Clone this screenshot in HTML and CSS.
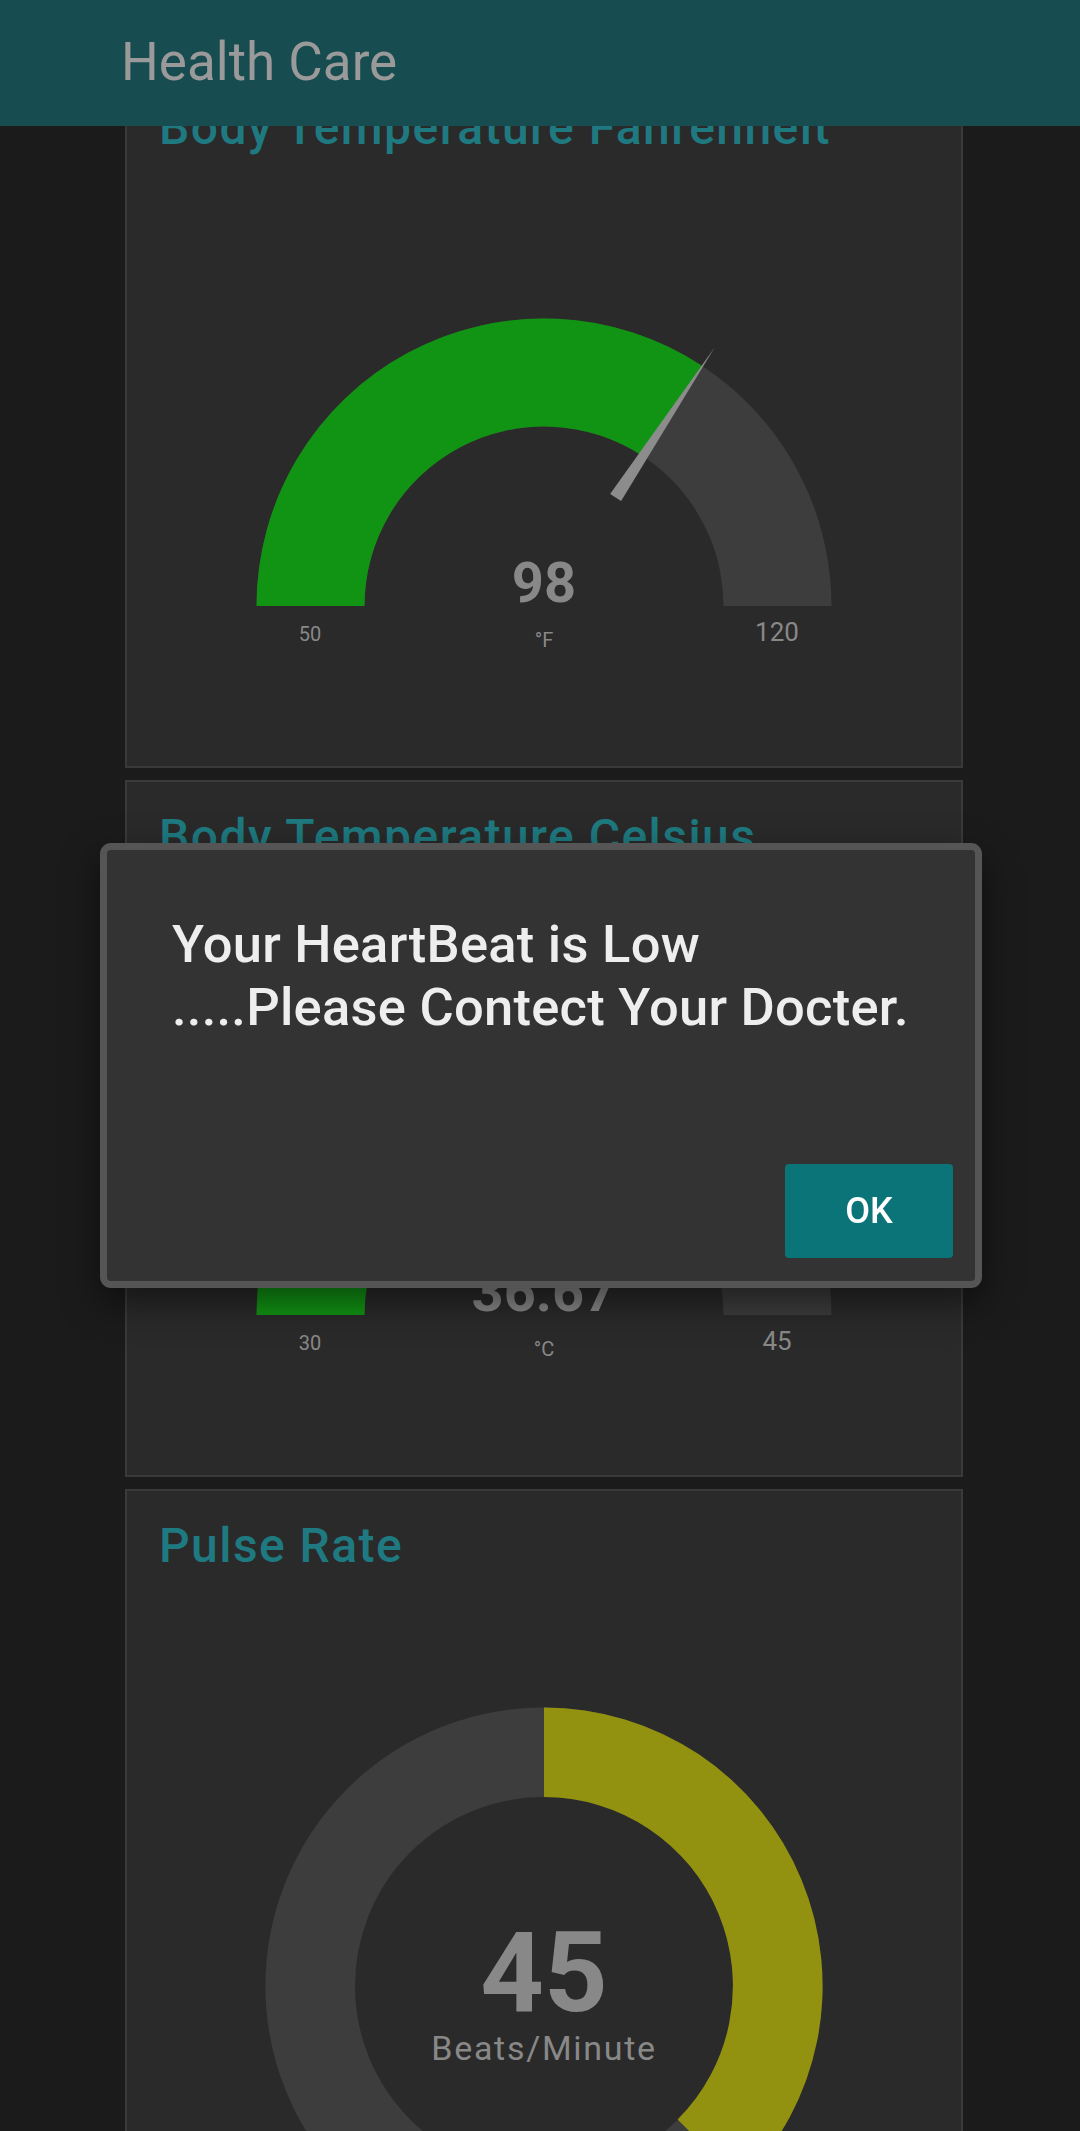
FILE: index.html
```html
<!DOCTYPE html>
<html lang="en">
<head>
<meta charset="utf-8">
<title>Health Care</title>
<link rel="stylesheet" href="styles.css">
</head>
<body>
<header class="appbar">
  <h1 class="appbar-title">Health Care</h1>
</header>

<main class="cards">
  <section class="card">
    <h2 class="card-title">Body Temperature Fahrenheit</h2>
    <svg class="gauge" viewBox="0 0 834 609" width="834" height="609">
      <path class="track" d="M129.5 450 A287.5 287.5 0 0 1 704.5 450 L596.5 450 A179.5 179.5 0 0 0 237.5 450 Z"/>
      <path class="fill-green" d="M129.5 450 A287.5 287.5 0 0 1 575.4 210.1 L515.9 300.2 A179.5 179.5 0 0 0 237.5 450 Z"/>
      <polygon class="needle" points="494.1,345.1 483.1,337.9 587.8,191.3"/>
      <text class="g-value" x="417" y="446">98</text>
      <text class="g-unit" x="417" y="491">°F</text>
      <text class="g-min" x="183" y="485">50</text>
      <text class="g-max" x="650" y="485">120</text>
    </svg>
  </section>

  <section class="card">
    <h2 class="card-title">Body Temperature Celsius</h2>
    <svg class="gauge" viewBox="0 0 834 609" width="834" height="609">
      <path class="track" d="M129.5 450 A287.5 287.5 0 0 1 704.5 450 L596.5 450 A179.5 179.5 0 0 0 237.5 450 Z"/>
      <path class="fill-green" d="M129.5 450 A287.5 287.5 0 0 1 367.3 166.8 L385.9 273.2 A179.5 179.5 0 0 0 237.5 450 Z"/>
      <polygon class="needle" points="401,320.9 388,323.1 363.4,144.7"/>
      <text class="g-value" x="417" y="446">36.67</text>
      <text class="g-unit" x="417" y="491">°C</text>
      <text class="g-min" x="183" y="485">30</text>
      <text class="g-max" x="650" y="485">45</text>
    </svg>
  </section>

  <section class="card">
    <h2 class="card-title">Pulse Rate</h2>
    <svg class="donut" viewBox="0 0 834 609" width="834" height="609">
      <circle class="ring" cx="417" cy="412" r="233.8"/>
      <path class="fill-olive" d="M417 133.4 A278.6 278.6 0 0 1 614 609 L550.6 545.6 A189 189 0 0 0 417 223 Z"/>
      <text class="d-value" x="417" y="437">45</text>
      <text class="d-unit" x="417" y="486">Beats/Minute</text>
    </svg>
  </section>
</main>

<div class="dialog" role="alertdialog">
  <p class="dialog-msg">Your HeartBeat is Low<br>.....Please Contect Your Docter.</p>
  <div class="dialog-actions">
    <button class="btn-ok" type="button">OK</button>
  </div>
</div>
</body>
</html>
```

FILE: styles.css
```css
* { box-sizing: border-box; }

html, body {
  margin: 0;
  padding: 0;
}

body {
  background: #1b1b1b;
  font-family: Roboto, "Noto Sans", "Liberation Sans", sans-serif;
  color: #eeeeee;
}

.appbar {
  position: fixed;
  top: 0;
  left: 0;
  right: 0;
  height: 126px;
  background: #174c50;
  z-index: 10;
  display: flex;
  align-items: center;
  padding-left: 121px;
}

.appbar-title {
  margin: 0;
  font-size: 53px;
  font-weight: 400;
  color: #9a9a9a;
  line-height: 62px;
  padding-bottom: 2px;
}

.cards {
  display: flex;
  flex-direction: column;
  gap: 12px;
  padding-top: 71px;
  padding-left: 125px;
}

.card {
  width: 838px;
  height: 697px;
  background: #2a2a2a;
  border: 2px solid #3a3a3a;
  padding: 27px 32px 0;
  flex-shrink: 0;
}

.card-title {
  margin: 0;
  font-size: 48px;
  font-weight: 500;
  letter-spacing: 1.45px;
  line-height: 56px;
  color: #1e7a80;
  white-space: nowrap;
}

.gauge, .donut {
  display: block;
  margin: 0 -32px;
  width: 834px;
  height: 609px;
}

.track { fill: #3d3d3d; }
.fill-green { fill: #119413; }
.needle { fill: #8c8c8c; }
.ring { fill: none; stroke: #3d3d3d; stroke-width: 89.6px; }
.fill-olive { fill: #939210; }

.g-value, .g-unit, .g-min, .g-max, .d-value, .d-unit {
  font-family: Roboto, "Noto Sans", sans-serif;
  text-anchor: middle;
  fill: #888888;
}

.g-value { font-size: 56px; font-weight: 700; }
.g-unit { font-size: 20px; }
.g-min { font-size: 20px; }
.g-max { font-size: 26px; }
.d-value { font-size: 111px; font-weight: 700; }
.d-unit { font-size: 34px; letter-spacing: 1.7px; }

.dialog {
  position: fixed;
  left: 100px;
  top: 843px;
  width: 882px;
  height: 445px;
  background: #333333;
  border: 7px solid #555555;
  border-radius: 11px;
  box-shadow: 0 14px 36px rgba(0, 0, 0, 0.5);
  z-index: 20;
  display: flex;
  flex-direction: column;
  padding: 63px 22px 23px 65px;
}

.dialog-msg {
  margin: 0;
  font-size: 52.5px;
  line-height: 63px;
  font-weight: 500;
  letter-spacing: 0.25px;
  color: #eeeeee;
  white-space: nowrap;
}

.dialog-actions {
  margin-top: auto;
  display: flex;
  justify-content: flex-end;
}

.btn-ok {
  width: 168px;
  height: 94px;
  background: #0b7478;
  border: none;
  border-radius: 4px;
  color: #ffffff;
  font-family: Roboto, "Noto Sans", sans-serif;
  font-size: 36px;
  font-weight: 500;
  padding: 0;
}
```
